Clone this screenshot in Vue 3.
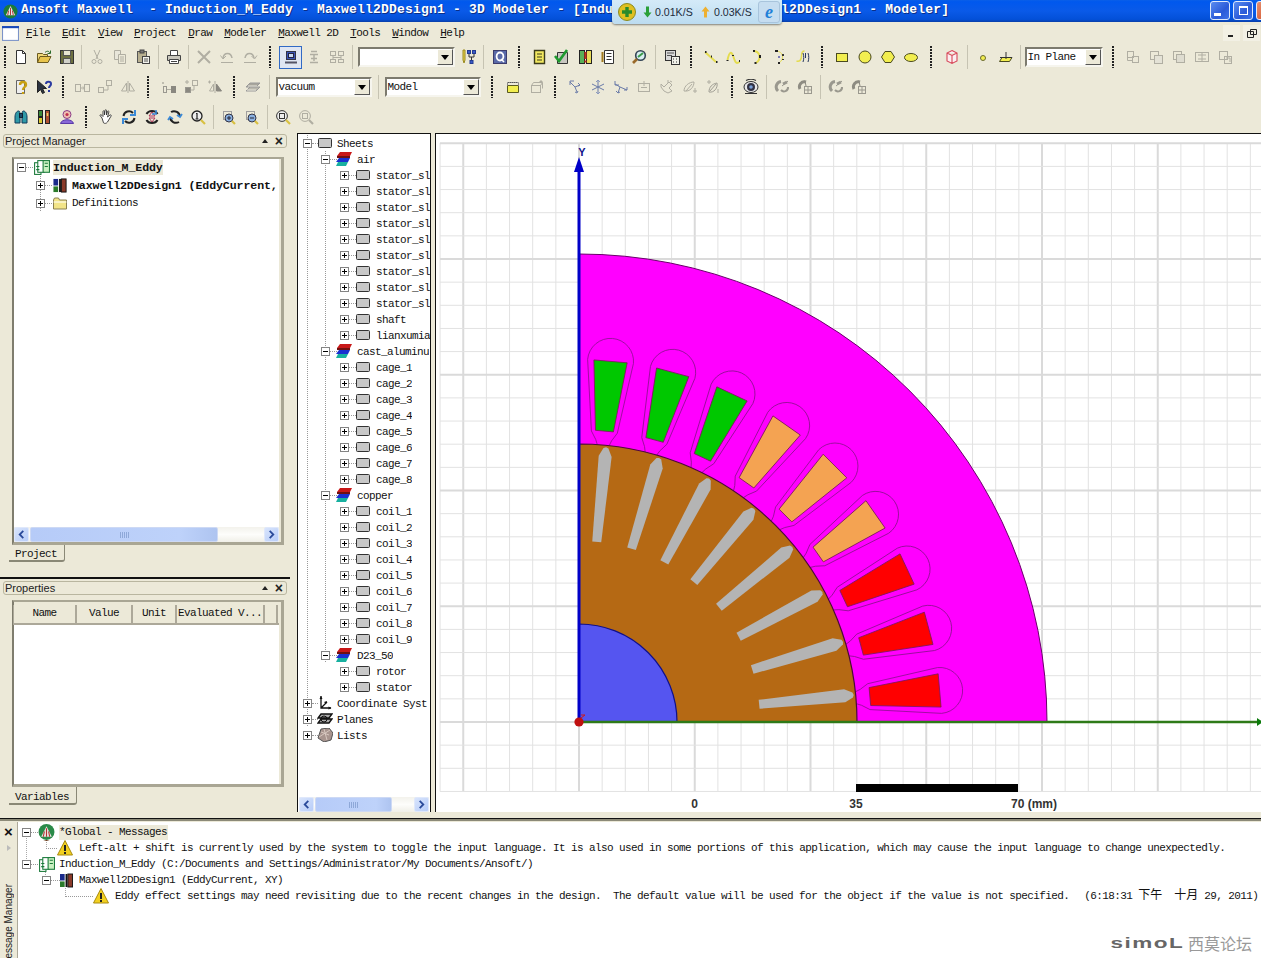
<script setup>
const GR = '#b0aea2'
const s = (d, c = '#222', w = 1, f = 'none') => `<path d="${d}" stroke="${c}" stroke-width="${w}" fill="${f}"/>`
const grayBox = (x, y, w, h, c = GR, f = 'none') => `<rect x="${x}" y="${y}" width="${w}" height="${h}" stroke="${c}" fill="${f}"/>`

const icons = {
  new: s('M3.5 1.5h6l3 3v10h-9z', '#333', 1, '#fff') + s('M9.5 1.5v3h3', '#333'),
  open: s('M1.5 13.5v-9h5l1 1h4v2', '#6b5a20', 1, '#f0d878') + s('M1.5 13.5l2.5-6h11l-3 6z', '#6b5a20', 1, '#e8c44c') + s('M9 3.5c2-2 4-1.5 5 .5m.5-2.5v3h-3', '#2a6a2a'),
  save: grayBox(1.5, 1.5, 13, 13, '#333', '#6d7040') + grayBox(4.5, 1.5, 7, 5, '#555', '#e8e6d0') + grayBox(4.5, 9.5, 7, 5, '#555', '#d0d0c8'),
  cut: s('M5 1l4 9M11 1l-4 9', GR) + `<circle cx="5" cy="12.5" r="2" stroke="${GR}" fill="none"/><circle cx="11" cy="12.5" r="2" stroke="${GR}" fill="none"/>`,
  copy: s('M2.5 1.5h6v9h-6z', GR, 1, '#e8e6da') + s('M6.5 5.5h7v9h-7z', GR, 1, '#ece9d8') + s('M8 8h4M8 10h4M8 12h4', GR),
  paste: grayBox(2.5, 2.5, 9, 11, '#555', '#b8b090') + grayBox(5, 1, 4, 3, '#444', '#777') + grayBox(7.5, 7.5, 7, 7, '#444', '#f2f2ec') + s('M9 10h4M9 12h4', '#555'),
  print: s('M4.5 1.5h7v5h-7z', '#444', 1, '#fff') + s('M1.5 6.5h13v5h-13z', '#444', 1, '#c8c6bc') + s('M3.5 10.5h9v4h-9z', '#444', 1, '#fff') + s('M5 12.5h6', '#444'),
  del: s('M2 2l12 12M14 2L2 14', GR, 2),
  undo: s('M4 9c1-6 8-6 9 0', GR, 1.5) + s('M1.5 6.5L4 10l3-3', GR) + s('M2 13.5h12', GR),
  redo: s('M3 9c1-6 8-6 9 0', GR, 1.5) + s('M9.5 7l3 3 2.5-3.5', GR) + s('M2 13.5h12', GR),
  select: grayBox(3.5, 2.5, 9, 8, '#334', '#3a55b8') + grayBox(5.5, 4.5, 5, 4, '#224', '#c8d8f0') + s('M2 13.5h12', '#556', 2),
  wifi: s('M5 2.5h6M4 5.5h8M8 6v6M5 9.5h6M4 13.5h8', GR, 1.5),
  net: grayBox(1.5, 2.5, 5, 4) + grayBox(9.5, 2.5, 5, 4) + grayBox(1.5, 10.5, 5, 3) + grayBox(9.5, 10.5, 5, 3) + s('M4 7v3M12 7v3M4 8.5h8', GR),
  tree: s('M3 1l2 0v10l-1 3-1-3z', '#9a8a20', 1, '#e8d44c') + grayBox(7.5, 1.5, 3, 3, '#233a90', '#3a5ac8') + grayBox(12.5, 1.5, 3, 3, '#233a90', '#3a5ac8') + s('M9 5v3h5V5M11.5 8v3', '#333') + grayBox(10, 11.5, 3, 3, '#233a90', '#3a5ac8'),
  q: grayBox(1.5, 1.5, 13, 13, '#3c3c6c', '#5a6aa8') + `<ellipse cx="8" cy="7.5" rx="3.4" ry="4" stroke="#fff" stroke-width="1.8" fill="none"/>` + s('M9 10l3 3', '#fff', 1.6),
  doc1: s('M3.5 1.5h10v13h-10z', '#3a3a1a', 1.4, '#f2e860') + s('M6 5h5M6 8h5M6 11h5', '#3a3a1a'),
  doc2: s('M3.5 3.5h10v11h-10z', '#333', 1, '#c8c6c0') + s('M1 7l4 5 8-11', '#1e9a2e', 2.6),
  doc3: grayBox(2.5, 1.5, 5, 13, '#222', '#58b058') + grayBox(9.5, 1.5, 5, 13, '#222', '#e8dc58') + s('M8.5 3v7', '#c03020', 2.2) + s('M8.5 11.5v2', '#c03020', 2.2),
  doc4: s('M4.5 1.5h9v13h-9z', '#333', 1, '#fff') + s('M6.5 4.5h5M6.5 7.5h5M6.5 10.5h5', '#333') + s('M2.5 3v10', '#a07a20', 2),
  search: `<circle cx="9.5" cy="6.5" r="4.8" stroke="#345" stroke-width="1.6" fill="#d8eef0"/>` + s('M6 10l-4 4', '#9a6a2a', 2.6) + s('M7 8l5-4', '#3a9a4a', 2),
  calc: grayBox(1.5, 1.5, 10, 10, '#333', '#d8d8d8') + s('M3 4h7M3 6.5h5', '#555') + grayBox(7.5, 7.5, 8, 8, '#333', '#f0f0e8') + s('M9 10h1M12 10h1M9 13h1M12 13h1', '#333'),
  cline: s('M2 3l11 10', '#e4dc50', 2) + s('M2 3h1.5M8 7.5h1M13 13h1.5', '#222', 2),
  spline: s('M1.5 11c2-9 4-9 6-3s3 7 6 5', '#e4dc50', 2) + s('M1.5 11v1M7 6v1M13 12h1', '#222', 2),
  arc: s('M4 2c7 0 9 8 3 12', '#e4dc50', 2) + s('M4 2h2M11 6v3M5.5 14h2', '#222', 2),
  arc2: s('M4 2c7 0 9 8 3 12', '#e4dc50', 1) + s('M3 2h3M11 5v2M11 10v1M6 14h2', '#222', 1.8) + `<circle cx="7" cy="8" r="1" fill="#55a"/>`,
  ft: s('M1.5 12c3 1 5-1 5-5s2-5 3-5', '#e4dc50', 1.5) + s('M8 4c1 3 1 6 0 9M13 4c1 3 1 6 0 9M10.5 4v5', '#2a3a60'),
  rect: grayBox(2.5, 4.5, 11, 8, '#4a4a20', '#f2ee50'),
  circle: `<circle cx="8" cy="8" r="6" stroke="#4a4a20" fill="#f2ee50"/>`,
  hex: s('M5 2.5h6l3.5 5.5L11 13.5H5L1.5 8z', '#4a4a20', 1, '#f2ee50'),
  ellipse: `<ellipse cx="8" cy="8.5" rx="6.5" ry="4" stroke="#4a4a20" fill="#f2ee50"/>`,
  prism: s('M8 1.5l5 2.5v8l-5 2.5-5-2.5V4z M3 4l5 2.5L13 4M8 6.5v8', '#d8485a', 1.1, '#fbeef0'),
  point: `<circle cx="8" cy="9" r="2.5" stroke="#6a6a30" fill="#f2ee50"/>`,
  plane: s('M4 8.5h10l-2.5 4h-10z', '#4a4a20', 1, '#f2ee50') + s('M8 3v7M2 8.5h12', '#333'),
  b1: grayBox(2.5, 2.5, 6, 6) + grayBox(7.5, 7.5, 6, 6) + s('M2.5 8.5v3h5', GR),
  b2: grayBox(2.5, 2.5, 8, 8) + grayBox(6.5, 6.5, 8, 8, GR, '#e4e2d6'),
  b3: grayBox(2.5, 2.5, 8, 8) + grayBox(5.5, 5.5, 8, 8, GR, '#dedcd0'),
  b4: grayBox(1.5, 3.5, 13, 9) + s('M8 4v8M4 6h8M4 10h8', GR),
  b5: grayBox(2.5, 2.5, 8, 8) + grayBox(7.5, 7.5, 7, 7, GR) + s('M9 9h4v4', GR),
  help: s('M3.5 1.5h8v13h-8z', '#666', 1, '#eee') + s('M7 6c0-4 6-4 6 0 0 2-3 2-3 5', '#c8a010', 2.4) + s('M10 13v2', '#c8a010', 2.2),
  whats: s('M1.5 1.5v12l3-3 2 4 2-1-2-4h4z', '#222', 1, '#2a3240') + s('M10 5c0-3 5-3 5 0 0 2-2 2-2 4', '#2a3aa0', 2) + s('M13 11v2', '#2a3aa0', 2),
  m1: grayBox(1.5, 5.5, 5, 7) + grayBox(10.5, 5.5, 5, 7) + s('M6.5 9h4M9 7.5l1.5 1.5L9 10.5', GR),
  m2: grayBox(1.5, 8.5, 5, 5) + grayBox(9.5, 1.5, 5, 5) + s('M7 11h4V7', GR),
  m3: s('M8 2v12', GR) + s('M6.5 4v8l-5 0z', GR) + s('M9.5 4v8l5 0z', GR),
  m4: s('M2 3v2M1 4h2', GR) + grayBox(2.5, 7.5, 3, 6, '#9a9890') + grayBox(10.5, 7.5, 4, 6, '#8a8880', '#8a8880') + s('M6 10.5h4', GR),
  m5: grayBox(1.5, 8.5, 5, 5, '#9a9890', '#8a8880') + grayBox(8.5, 1.5, 5, 5, GR) + s('M7 11h3V7M1 3h4M3 1v4', GR),
  m6: s('M8 2v12M1 3h3M2.5 1.5v3', GR) + s('M6.5 5v7l-4 0z', GR) + s('M9.5 5v7l5 0z', '#8a8880', 1, '#8a8880'),
  sheets: s('M5 4h10l-4 4H1z', '#999', 1, '#a8a69c') + s('M5 8h10l-4 4H1z', '#999', 1, '#bab8ac') + s('M3 7l9 0M2 11h9', '#e8e6dc'),
  box1: s('M2.5 6.5h11v7h-11z', '#5a5a20', 1, '#f2ee50') + s('M2.5 6.5v-3h11v3', '#888', 1) + `<path d="M3 3.5h10" stroke="#555" stroke-dasharray="1 1"/>`,
  box2: grayBox(3.5, 6.5, 9, 7) + s('M3.5 6.5l2-3h9l-2 3M14.5 3.5v6', GR) + s('M13 1v3M11.5 2.5h3', GR),
  ax1: s('M3 3l5 5 5-2M8 8l2 5M3 6V2h4M11 4l2 2-2 1M8 13l2 1 1-2', '#6a7ba8'),
  ax2: s('M8 1v14M2 5l12 6M14 5L2 11', '#6a7ba8') + s('M6 3l2-2 2 2M6 13l2 2 2-2', '#8a9ac0'),
  ax3: s('M2 5l5 3 7 3M7 8L5 14M2 2v4h4M11 11l3 0 0-3M3 12l2 2 2-1', '#6a7ba8'),
  g1: grayBox(2.5, 4.5, 11, 8) + s('M8 2v5M5 8.5h6', GR),
  g2: s('M2 5l3 3 5-5 3 3-3 3 3 3-4 2-4-2-3-4z M9 1v3M11 2l2 1', GR),
  g3: s('M2 12c0-5 5-9 10-9 0 5-4 10-10 9zM4 12l6-7', GR) + s('M13 9v5M11 12h4', GR),
  g4: s('M4 13c0-5 3-8 8-9 1 5-3 10-8 9z M5 12l6-7', '#a09e94') + s('M2 3h4M4 1v4M13 10v4', GR),
  eye: `<ellipse cx="8" cy="8" rx="7" ry="5.5" stroke="#333" fill="#e8e8e8"/><circle cx="8" cy="8" r="4" fill="#334" /><circle cx="8" cy="8" r="1.8" fill="#7aa0d8"/>` + s('M3 1.5c3-1.5 7-1.5 10 0M2 14.5h12', '#333', 1.2),
  rotg: s('M4 12a5.5 5.5 0 0 1 3-9.5', '#9a988e', 3) + s('M13 3l-4 2', '#9a988e', 3) + s('M8 7l6-5', '#9a988e', 1) + s('M7 11a4 4 0 0 0 7-3', '#9a988e', 2),
  rotb: s('M3 10a5 5 0 0 1 6-7', '#8e8c82', 3) + s('M4 3l4-1 1 5', '#8e8c82') + grayBox(7.5, 7.5, 7, 7, '#9a988e') + s('M7.5 11h7M11 7.5v7', '#9a988e'),
  binoc: s('M2 8c0-4 2-6 3.5-6S7 4 7 7v7H2z', '#103a5a', 1, '#2f9aa8') + s('M14 8c0-4-2-6-3.5-6S9 4 9 7v7h5z', '#103a5a', 1, '#2f9aa8') + grayBox(6.5, 4.5, 3, 4, '#123', '#1a4a6a'),
  bars: grayBox(2.5, 1.5, 4, 6, '#222', '#3a8a3a') + grayBox(2.5, 8.5, 4, 6, '#222', '#dcc830') + grayBox(9.5, 1.5, 4, 13, '#222', '#b05030') + s('M11.5 4v3', '#f2d060', 1.5),
  person: `<circle cx="8" cy="5.5" r="4" stroke="#8a3a8a" fill="#f0c0b0"/><circle cx="8" cy="5.5" r="1.6" fill="#c03050"/>` + s('M1.5 14.5c1-5 12-5 13 0z', '#5a3aa8', 1, '#8868d8'),
  hand: s('M4 9L2 6.5c0-1 1-1 2 0l1 1V2.5c0-1 1.5-1 1.5 0V6l.5-4.5c0-1 1.5-1 1.5 0V6l1-3.5c.3-1 1.6-.6 1.4.4L9.5 8l2.5-2c1-.5 1.6.5 1 1.2L9.5 13c-1 1.5-3 1.8-4 .8z', '#333', .9, '#fff'),
  rot1: s('M2.5 7a5.5 5.5 0 0 1 9.5-3', '#222', 2) + s('M13.5 9a5.5 5.5 0 0 1-9.5 3', '#222', 2) + s('M14 1v5h-5', '#3a8ad8', 2) + s('M2 15v-5h5', '#3a8ad8', 2),
  rot2: s('M2.5 5a6 5 0 0 1 11 0M2.5 11a6 5 0 0 0 11 0', '#222', 2) + s('M8 3l-3 4h6zM8 13l-3-4h6z', '#b0365a', 1) + s('M12 1v4h-4', '#3a8ad8', 1.6),
  rot3: s('M4 3a6 6 0 0 1 9 5M12 13a6 6 0 0 1-9-5', '#222', 2) + s('M15 5l-2 3-3-2M1 11l2-3 3 2', '#3a8ad8', 1.8),
  zinfo: `<circle cx="7" cy="7" r="5" stroke="#222" stroke-width="1.3" fill="#eee"/>` + s('M7 4v6M6 4.5h1M5.5 10h3', '#222', 1.2) + s('M11 11l4 4', '#d8c040', 2.2),
  zin: s('M2.5 2.5h8v8h-8z', '#556', 1, 'none').replace('/>', ' stroke-dasharray="1 1"/>') + `<circle cx="8" cy="9" r="4" fill="#8ab0e0" stroke="#334"/>` + s('M6 9h4M8 7v4', '#223') + s('M11 12l3 3', '#d8c040', 2.2),
  zout: s('M2.5 2.5h8v8h-8z', '#556', 1, 'none').replace('/>', ' stroke-dasharray="1 1"/>') + `<circle cx="8" cy="9" r="4" fill="#8ab0e0" stroke="#334"/>` + s('M6 9h4', '#223') + s('M11 12l3 3', '#d8c040', 2.2),
  zfit: `<circle cx="7" cy="7" r="5.4" stroke="#333" fill="#eee"/>` + grayBox(4.5, 4.5, 5, 5, '#333') + s('M11 11l4 4', '#d8c040', 2.2),
  zfitg: `<circle cx="7" cy="7" r="5.4" stroke="${GR}" fill="none"/>` + grayBox(4.5, 4.5, 5, 5) + s('M11 11l4 4', GR, 2.2),
}

const i = (...names) => names.map(n => ({ t: 'i', n }))
const g = w => ({ t: 'g', w })
const p = w => ({ t: 's', w })
const c = (w, text) => ({ t: 'c', w, text })

const row1 = [g(9), ...i('new', 'open', 'save'), p(7), ...i('cut', 'copy', 'paste'), p(8), ...i('print'), p(7), ...i('del', 'undo', 'redo'), g(18),
  { t: 'i', n: 'select', on: true }, ...i('wifi', 'net'), p(8), c(100, ''), ...i('tree'), p(9), ...i('q'), g(16), ...i('doc1', 'doc2', 'doc3', 'doc4'), p(8), ...i('search'), p(10), ...i('calc'), g(16),
  ...i('cline', 'spline', 'arc', 'arc2', 'ft'), g(16), ...i('rect', 'circle', 'hex', 'ellipse'), g(18), ...i('prism'), p(8), ...i('point', 'plane'), p(6), c(81, 'In Plane'), g(17), ...i('b1', 'b2', 'b3', 'b4', 'b5')]
const row2 = [g(9), ...i('help', 'whats'), g(15), ...i('m1', 'm2', 'm3'), g(18), ...i('m4', 'm5', 'm6'), g(15), ...i('sheets'), p(10), c(99, 'vacuum'), p(10), c(99, 'Model'), g(19), ...i('box1', 'box2'), g(16),
  ...i('ax1', 'ax2', 'ax3', 'g1', 'g2', 'g3', 'g4'), g(15), ...i('eye'), p(8), ...i('rotg', 'rotb'), p(8), ...i('rotg', 'rotb')]
const row3 = [g(9), ...i('binoc', 'bars', 'person'), g(16), ...i('hand', 'rot1', 'rot2', 'rot3', 'zinfo'), p(8), ...i('zin', 'zout'), p(8), ...i('zfit', 'zfitg')]
const toolbars = [row1, row2, row3]

const titleText = 'Ansoft Maxwell  - Induction_M_Eddy - Maxwell2DDesign1 - 3D Modeler - [Induction_M_Eddy - Maxwell2DDesign1 - Modeler]'
const warnA = 'Left-alt + shift is currently used by the system to toggle the input language. It is also used in some portions of this application, which may cause the input language to change unexpectedly.'
const warnB = 'Eddy effect settings may need revisiting due to the recent changes in the design.  The default value will be used for the object if the value is not specified.  '

const menus = ['File', 'Edit', 'View', 'Project', 'Draw', 'Modeler', 'Maxwell 2D', 'Tools', 'Window', 'Help']

const kids = names => names.map(n => ({ lv: 2, text: n, icon: 'sheet', g: 'g0 g1', box: 'plus' }))
const tree = [
  { lv: 0, text: 'Sheets', icon: 'sheet', g: 'g0', box: 'minus' },
  { lv: 1, text: 'air', icon: 'stack', g: 'g0 g1', box: 'minus' },
  ...kids([...Array(9).fill('stator_sl'), 'shaft', 'lianxumia']),
  { lv: 1, text: 'cast_aluminu', icon: 'stack', g: 'g0 g1', box: 'minus' },
  ...kids(Array.from({ length: 8 }, (_, k) => `cage_${k + 1}`)),
  { lv: 1, text: 'copper', icon: 'stack', g: 'g0 g1', box: 'minus' },
  ...kids(Array.from({ length: 9 }, (_, k) => `coil_${k + 1}`)),
  { lv: 1, text: 'D23_50', icon: 'stack', g: 'g0 g1', box: 'minus' },
  { lv: 2, text: 'rotor', icon: 'sheet', g: 'g0', box: 'plus' },
  { lv: 2, text: 'stator', icon: 'sheet', g: 'g0', box: 'plus' },
  { lv: 0, text: 'Coordinate Syst', icon: 'coord', g: 'g0', box: 'plus' },
  { lv: 0, text: 'Planes', icon: 'planes', g: 'g0', box: 'plus' },
  { lv: 0, text: 'Lists', icon: 'lists', g: '', box: 'plus' },
]

const columns = [
  { t: 'Name', w: 63 }, { t: 'Value', w: 56 }, { t: 'Unit', w: 44 }, { t: 'Evaluated V...', w: 88 }, { t: '', w: 13 },
]

/* Drawing: local slot shapes are given on the +Y axis and rotated about the origin. */
const OX = 579, OY = 722, CELL = 23.15
const gridV = [], gridH = []
for (let k = -6; k <= 30; k++) gridV.push({ x: OX + k * CELL, major: k % 5 === 0 })
for (let k = -3; k <= 25; k++) gridH.push({ y: OY - k * CELL, major: k % 5 === 0 })

const pt = (v, r) => `${OX + v} ${OY - r}`
const slotPath = `M${pt(-6, 278)} L${pt(-8, 283)} L${pt(-13, 291)} L${pt(-23, 362)} A23 23 0 0 1 ${pt(23, 362)} L${pt(13, 291)} L${pt(8, 283)} L${pt(6, 278)}`
const coilPath = `M${pt(-9, 292)} L${pt(-16.7, 362)} L${pt(16.7, 362)} L${pt(9, 292)}Z`
const barPath = `M${pt(-4.5, 181)} L${pt(-6.5, 267)} L${pt(-2.5, 275)} L${pt(0, 276)} L${pt(2.5, 275)} L${pt(6.5, 267)} L${pt(4.5, 181)}Z`
const coilColors = ['#00c800', '#00c800', '#00c800', '#f4a352', '#f4a352', '#f4a352', '#ff0000', '#ff0000', '#ff0000']
const slots = coilColors.map((color, k) => ({ color, a: 5 + k * 10 }))
const bars = Array.from({ length: 8 }, (_, k) => 5.625 + k * 11.25)
const sector = r => `M${OX} ${OY}V${OY - r}A${r} ${r} 0 0 1 ${OX + r} ${OY}Z`
</script>

<template>
  <div class="app mono">
    <header class="title">
      <svg class="logo" viewBox="0 0 16 16"><circle cx="8" cy="8" r="7.5" fill="#1c7a3a" /><path d="M8 2l5 10H3z" fill="#e8e8e8" /><path d="M8 4v8M6 7l-1 5M10 7l1 5" stroke="#b03030" /></svg>
      <div class="title-text">{{ titleText }}</div>
      <div class="win-btns">
        <span class="wbtn"><i class="w-min"></i></span>
        <span class="wbtn"><i class="w-res"></i></span>
        <span class="wbtn close"></span>
      </div>
      <div class="netmeter sans">
        <svg class="net-plus" viewBox="0 0 18 18"><circle cx="9" cy="9" r="8.5" fill="#e0c020" stroke="#8a8a20" /><path d="M9 4v10M4 9h10" stroke="#2a8a2a" stroke-width="3.4" /></svg>
        <svg class="net-arrow first" viewBox="0 0 9 12"><path d="M4.5 11.5L.5 6.5h2.5V.5h3v6h2.5z" fill="#2aa038" /></svg>
        <span class="rate">0.01K/S</span>
        <svg class="net-arrow" viewBox="0 0 9 12"><path d="M4.5 .5L.5 5.5h2.5v6h3v-6h2.5z" fill="#eeb030" /></svg>
        <span class="rate">0.03K/S</span>
        <span class="ie"><b>e</b></span>
      </div>
    </header>

    <nav class="menu">
      <svg class="mdi-icon" viewBox="0 0 16 16"><rect x=".5" y="1.5" width="15" height="13" fill="#fff" stroke="#7c93c8" /><rect x="0" y="1" width="16" height="2" fill="#1a4ab8" /></svg>
      <span v-for="m in menus" :key="m"><u>{{ m[0] }}</u>{{ m.slice(1) }}</span>
      <div class="mdi-btns">
        <span class="mdi-btn"><svg viewBox="0 0 12 12"><path d="M2 9h5" stroke="#222" stroke-width="2" /></svg></span>
        <span class="mdi-btn"><svg viewBox="0 0 12 12"><path d="M4.5 2.5h6v5h-6zM1.5 4.5h6v6h-6z" stroke="#222" fill="#eeecdf" /></svg></span>
      </div>
    </nav>

    <section v-for="(bar, idx) in toolbars" :key="idx" class="toolbar">
      <template v-for="(it, n) in bar" :key="n">
        <span v-if="it.t === 'i'" class="cell" :class="{ on: it.on }">
          <svg class="ic" viewBox="0 0 16 16" v-html="icons[it.n]"></svg>
        </span>
        <span v-else-if="it.t === 'g'" class="grip" :style="{ width: it.w + 'px' }"></span>
        <span v-else-if="it.t === 's'" class="sep" :style="{ width: it.w + 'px' }"></span>
        <span v-else class="combo-cell" :style="{ width: it.w + 'px' }">
          <span class="combo"><span class="combo-text">{{ it.text }}</span><span class="combo-btn"></span></span>
        </span>
      </template>
    </section>

    <main class="main">
      <aside class="left">
        <div class="pane pane-project">
          <div class="pane-title sans"><span>Project Manager</span><span class="pane-ctl"><i class="tri"></i><b>×</b></span></div>
          <div class="frame">
            <div class="frame-body">
              <div class="ptree">
                <div class="prow p0">
                  <i class="bx minus"></i><i class="stub s-root"></i>
                  <svg class="pic" viewBox="0 0 16 16"><rect x="1.5" y="3.5" width="6" height="11" fill="#fff" stroke="#1a7a3a" /><rect x="4.5" y="1.5" width="6" height="11" fill="#fff" stroke="#1a7a3a" /><rect x="9.5" y="1.5" width="6" height="11" fill="#c8f0c0" stroke="#1a7a3a" /><path d="M11 4h3M11 7h3M3 7h3M3 10h3" stroke="#1a7a3a" /></svg>
                  <b class="sel">Induction_M_Eddy</b>
                </div>
                <div class="prow p1 pg">
                  <i class="bx plus"></i><i class="stub"></i>
                  <svg class="pic2" viewBox="0 0 14 16"><rect x="0" y="1" width="5" height="7" fill="#1a2a8a" /><rect x="0" y="9" width="5" height="6" fill="#2a7a2a" /><rect x="6" y="1" width="2" height="14" fill="#111" /><rect x="8.5" y="1" width="5" height="14" fill="#8a3a2a" stroke="#111" /></svg>
                  <b class="clip">Maxwell2DDesign1 (EddyCurrent, XY)</b>
                </div>
                <div class="prow p1 pg">
                  <i class="bx plus"></i><i class="stub"></i>
                  <svg class="pic2" viewBox="0 0 14 14"><path d="M.5 3.5l1-2h4l1 2h7v9H.5z" fill="#f2e488" stroke="#8a8050" /><path d="M.5 5.5h13" stroke="#fff" /></svg>
                  <span>Definitions</span>
                </div>
              </div>
              <div class="sb">
                <span class="sb-btn"><svg viewBox="0 0 10 10"><path d="M7 1L3 5l4 4" stroke="#2a4a9a" stroke-width="2" fill="none" /></svg></span>
                <span class="sb-thumb thumb-a"></span>
                <span class="sb-track"></span>
                <span class="sb-btn"><svg viewBox="0 0 10 10"><path d="M3 1l4 4-4 4" stroke="#2a4a9a" stroke-width="2" fill="none" /></svg></span>
              </div>
            </div>
          </div>
          <div class="tab tab-project">Project</div>
        </div>
        <div class="hline"></div>
        <div class="pane pane-props">
          <div class="pane-title sans"><span>Properties</span><span class="pane-ctl"><i class="tri"></i><b>×</b></span></div>
          <div class="frame frame-props">
            <div class="frame-body">
              <div class="thead">
                <span v-for="col in columns" :key="col.t" class="th" :style="{ width: col.w + 'px' }">{{ col.t }}</span>
              </div>
            </div>
          </div>
          <div class="tab tab-vars">Variables</div>
        </div>
      </aside>

      <section class="treepane">
        <div class="tree">
          <div v-for="(r, n) in tree" :key="n" class="trow" :class="['lv' + r.lv, r.g]">
            <i class="bx" :class="r.box"></i><i class="stub"></i>
            <svg v-if="r.icon === 'sheet'" class="tic" viewBox="0 0 14 10"><rect x=".5" y=".5" width="13" height="9" rx="1" fill="#c8c8c8" stroke="#333" /></svg>
            <svg v-else-if="r.icon === 'stack'" class="tic-big" viewBox="0 0 16 14" preserveAspectRatio="none"><path d="M4 0h12l-2 4H1z" fill="#c81818" /><path d="M1 4h13v2H1z" fill="#701010" /><path d="M3 6h11l-2 4H0z" fill="#1a30d0" /><path d="M2 10h10l-2 4H0z" fill="#18b0a0" /></svg>
            <svg v-else-if="r.icon === 'coord'" class="tic-big" viewBox="0 0 14 14"><path d="M3 0v12h10M3 12l6-6" stroke="#111" stroke-width="1.3" fill="none" /><path d="M3 0L1.5 3h3zM13.5 12l-3-1.5v3zM9 5L6 6l2 2z" fill="#111" /></svg>
            <svg v-else-if="r.icon === 'planes'" class="tic-big" viewBox="0 0 16 12"><path d="M4 1h11l-3 4H1zM4 6h11l-3 4H1z" fill="#aaa" stroke="#111" stroke-width="1.4" /><circle cx="7" cy="6" r="3" fill="none" stroke="#111" /></svg>
            <svg v-else class="tic-big" viewBox="0 0 16 14"><path d="M4 1l8-1 4 5-2 7-7 2-6-4z" fill="#a8948e" stroke="#555" /><path d="M4 4l8 3M7 1l3 11M2 9l11-7" stroke="#d8c8c0" /></svg>
            <span class="tlabel">{{ r.text }}</span>
          </div>
        </div>
        <div class="sb sb-tree">
          <span class="sb-btn"><svg viewBox="0 0 10 10"><path d="M7 1L3 5l4 4" stroke="#2a4a9a" stroke-width="2" fill="none" /></svg></span>
          <span class="sb-thumb thumb-b"></span>
          <span class="sb-track"></span>
          <span class="sb-btn"><svg viewBox="0 0 10 10"><path d="M3 1l4 4-4 4" stroke="#2a4a9a" stroke-width="2" fill="none" /></svg></span>
        </div>
      </section>

      <section class="canvas">
        <svg class="draw" width="825" height="678" viewBox="436 134 825 678">
          <g fill="none">
            <line v-for="l in gridV" :key="'v' + l.x" :x1="l.x" :x2="l.x" y1="143" y2="791.5" :stroke-width="l.major ? 2 : 1" :stroke="l.major ? '#dadada' : '#e2e2e2'" />
            <line v-for="l in gridH" :key="'h' + l.y" x1="440" x2="1261" :y1="l.y" :y2="l.y" :stroke-width="l.major ? 2 : 1" :stroke="l.major ? '#dadada' : '#e2e2e2'" />
          </g>
          <path :d="sector(468)" fill="#ff00ff" stroke="#6a006a" />
          <g v-for="sl in slots" :key="sl.a" :transform="`rotate(${sl.a} ${OX} ${OY})`">
            <path :d="slotPath" fill="none" stroke="#8e1090" stroke-width=".8" />
            <path :d="coilPath" :fill="sl.color" stroke="#7a1a5a" stroke-width=".8" />
          </g>
          <path :d="sector(278)" fill="#b56914" stroke="#4a0a3a" stroke-width="1.2" />
          <path v-for="a in bars" :key="a" :d="barPath" fill="#b4b4b4" :transform="`rotate(${a} ${OX} ${OY})`" />
          <path :d="sector(98)" fill="#5555f0" stroke="#10108a" stroke-width="1.2" />
          <path d="M579 722V170" stroke="#0000c8" stroke-width="3" />
          <path d="M579 157l5 15h-10z" fill="#0000c8" />
          <text x="582" y="156" text-anchor="middle" class="axis-y">Y</text>
          <path d="M579 722H1261" stroke="#2e7a18" stroke-width="2.4" />
          <path d="M1257 718l6 4-6 4z" fill="#0a7a0a" />
          <path d="M581 718l4-3m-4 0h4" stroke="#d01818" />
          <circle cx="579" cy="722" r="4.6" fill="#c01010" />
          <rect x="856" y="784" width="162" height="8" fill="#000" />
          <text x="694.5" y="808" class="scale" text-anchor="middle">0</text>
          <text x="856" y="808" class="scale" text-anchor="middle">35</text>
          <text x="1011" y="808" class="scale">70 (mm)</text>
        </svg>
      </section>
    </main>

    <footer class="msgs">
      <div class="msg-side">
        <b class="msg-x sans">×</b>
        <i class="msg-tri"></i>
        <span class="msg-label sans">Message Manager</span>
      </div>
      <div class="msg-body">
        <div class="mrow m-a gl-b">
          <i class="bx minus"></i><i class="stub"></i>
          <svg class="mic" viewBox="0 0 16 16"><circle cx="8" cy="7.5" r="7.5" fill="#2a8a48" /><path d="M8 2l5 10H3z" fill="#e8e4e0" /><path d="M8 4v8M6 7l-1 5M10 7l1 5" stroke="#b03030" /><path d="M5 15h6l-3 1z" fill="#6a3a1a" /></svg>
          <span class="sel sel-m">*Global - Messages</span>
        </div>
        <div class="mrow m-b gl-full">
          <i class="stub s-lead"></i>
          <svg class="warn" viewBox="0 0 16 16"><path d="M8 .5L15.5 15H.5z" fill="#f2d020" stroke="#a88a10" /><path d="M8 5v6" stroke="#222" stroke-width="2" /><path d="M8 12v2" stroke="#222" stroke-width="2" /></svg>
          <span>{{ warnA }}</span>
        </div>
        <div class="mrow m-a gl-t">
          <i class="bx minus"></i><i class="stub"></i>
          <svg class="mic" viewBox="0 0 16 16"><rect x="1.5" y="3.5" width="6" height="11" fill="#fff" stroke="#1a7a3a" /><rect x="4.5" y="1.5" width="6" height="11" fill="#fff" stroke="#1a7a3a" /><rect x="9.5" y="1.5" width="6" height="11" fill="#c8f0c0" stroke="#1a7a3a" /><path d="M11 4h3M11 7h3M3 7h3M3 10h3" stroke="#1a7a3a" /></svg>
          <span>Induction_M_Eddy (C:/Documents and Settings/Administrator/My Documents/Ansoft/)</span>
        </div>
        <div class="mrow m-c">
          <i class="bx minus"></i><i class="stub s-mid"></i>
          <svg class="mic2" viewBox="0 0 14 16"><rect x="0" y="1" width="5" height="7" fill="#1a2a8a" /><rect x="0" y="9" width="5" height="6" fill="#2a7a2a" /><rect x="6" y="1" width="2" height="14" fill="#111" /><rect x="8.5" y="1" width="5" height="14" fill="#8a3a2a" stroke="#111" /></svg>
          <span>Maxwell2DDesign1 (EddyCurrent, XY)</span>
        </div>
        <div class="mrow m-d">
          <i class="stub s-long"></i>
          <svg class="warn" viewBox="0 0 16 16"><path d="M8 .5L15.5 15H.5z" fill="#f2d020" stroke="#a88a10" /><path d="M8 5v6" stroke="#222" stroke-width="2" /><path d="M8 12v2" stroke="#222" stroke-width="2" /></svg>
          <span>{{ warnB }}<span class="stamp">(6:18:31 <span class="cjk">下午</span>{{ '  ' }}<span class="cjk">十月</span> 29, 2011)</span></span>
        </div>
        <div class="watermark"><b class="wm-latin sans">simoL</b><span class="wm-cjk">西莫论坛</span></div>
      </div>
    </footer>
  </div>
</template>

<style>
html, body { margin: 0; background: #ece9d8; overflow: hidden; }
</style>

<style scoped>
.app { width: 1261px; height: 958px; display: flex; flex-direction: column; overflow: hidden; background: #ece9d8; color: #111; }
.mono { font-family: "Liberation Mono", "Noto Sans CJK SC", monospace; font-size: 11px; letter-spacing: -0.6px; white-space: pre; }
.sans { font-family: "Liberation Sans", sans-serif; letter-spacing: 0; }

.title { position: relative; flex: none; height: 22px; display: flex; align-items: center; background: linear-gradient(#0a5fe8 0, #0058ee 8%, #0a5ae8 50%, #0350d8 88%, #0a3ea8 100%); color: #fff; }
.logo { width: 15px; height: 15px; margin: 0 3px 0 3px; flex: none; }
.title-text { font-family: "Liberation Mono", monospace; font-weight: 700; font-size: 13px; letter-spacing: .2px; line-height: 19px; height: 22px; text-shadow: 1px 1px 0 #0a2f88; white-space: pre; }
.win-btns { position: absolute; right: -15px; top: 1px; display: flex; gap: 3px; }
.wbtn { width: 20px; height: 19px; border: 1px solid #dfe9fb; border-radius: 3px; box-sizing: border-box; background: linear-gradient(135deg, #5a8cf0, #2a5ad8 60%, #3e72e8); display: flex; align-items: center; justify-content: center; }
.wbtn.close { background: linear-gradient(135deg, #e89070, #d04a20); }
.w-min { width: 7px; height: 3px; background: #fff; margin: 8px 6px 0 0; }
.w-res { width: 7px; height: 6px; border: 1px solid #fff; border-top-width: 2px; }
.netmeter { position: absolute; left: 612px; top: 0; width: 170px; height: 24px; box-sizing: border-box; display: flex; align-items: center; padding-left: 6px; font-size: 11px; color: #1c2c3c; background: linear-gradient(#d4eaf8, #bcdcf0); border-radius: 0 0 4px 4px; box-shadow: 0 1px 2px rgba(0, 0, 0, .45); }
.net-plus { width: 18px; height: 18px; margin-right: 7px; flex: none; }
.net-arrow { width: 9px; height: 12px; flex: none; margin: 0 4px 0 8px; }
.net-arrow.first { margin: 0 3px 0 0; }
.rate { width: 38px; flex: none; font-size: 10.6px; }
.ie { margin-left: 6px; width: 22px; height: 22px; background: #c6ddf0; border: 1px solid #a8c4dc; border-radius: 3px; box-sizing: border-box; display: flex; align-items: center; justify-content: center; font: italic 700 18px "Liberation Serif", serif; color: #2080d8; }

.menu { flex: none; height: 20px; display: flex; align-items: center; gap: 12px; box-sizing: border-box; padding: 2px 0 0 2px; background: #ece9d8; }
.mdi-icon { width: 17px; height: 17px; margin-right: -5px; flex: none; }
.mdi-btns { margin-left: auto; display: flex; gap: 3px; margin-right: 1px; }
.mdi-btn { width: 17px; height: 16px; background: #f2f0e4; display: flex; align-items: center; justify-content: center; }
.mdi-btn svg { width: 12px; height: 12px; }

.toolbar { flex: none; height: 30px; display: flex; align-items: center; }
.cell { width: 23px; height: 23px; flex: none; display: flex; align-items: center; justify-content: center; box-sizing: border-box; }
.cell.on { border: 1px solid #316ac5; background: #e0e6f2; }
.ic { width: 16px; height: 16px; display: block; }
.grip { flex: none; height: 22px; background: repeating-linear-gradient(#222 0 2px, transparent 2px 3px) center / 2px 100% no-repeat; }
.sep { flex: none; height: 24px; background: linear-gradient(#c6c3b2, #c6c3b2) center / 1px 100% no-repeat; }
.combo-cell { flex: none; display: flex; justify-content: center; }
.combo { width: calc(100% - 3px); min-width: 0; height: 20px; box-sizing: border-box; display: flex; align-items: center; background: #fff; border: 2px solid; border-color: #7c7a6e #f6f5ee #f6f5ee #7c7a6e; }
.combo-text { flex: 1; padding-left: 1px; overflow: hidden; }
.combo-btn { width: 16px; height: 16px; flex: none; box-sizing: border-box; border: 1px solid; border-color: #fff #555 #555 #fff; background: #ece9d8; position: relative; }
.combo-btn::after { content: ""; position: absolute; left: 3px; top: 5px; border: 4px solid transparent; border-top: 5px solid #000; border-bottom: 0; }

.main { flex: none; height: 686px; display: flex; }
.left { width: 290px; flex: none; display: flex; flex-direction: column; }
.pane-project { height: 445px; flex: none; display: flex; flex-direction: column; }
.pane-props { flex: 1; display: flex; flex-direction: column; min-height: 0; }
.hline { flex: none; background: #111; height: 2px; }
.pane-title { flex: none; height: 14px; box-sizing: border-box; margin: 2px 3px 0; padding: 0 3px 0 1px; display: flex; justify-content: space-between; align-items: center; font-size: 11px; line-height: 12px; border: 1px solid #b9b69f; border-radius: 3px; color: #222; }
.pane-ctl { display: flex; align-items: center; gap: 7px; }
.tri { width: 0; height: 0; border: 3px solid transparent; border-bottom: 4px solid #222; border-top: 0; }
.pane-ctl b { font-size: 14px; line-height: 12px; }
.frame { flex: 1; min-height: 0; margin: 9px 6px 0 12px; border-style: solid; border-width: 2px 3px 3px 2px; border-color: #a9a694 #a9a694 #a9a694 #7f7d6e; display: flex; box-sizing: border-box; }
.frame-body { flex: 1; margin-right: 2px; background: #fff; display: flex; flex-direction: column; min-width: 0; }
.frame-props { margin-top: 5px; }
.frame-props .frame-body { margin-top: 3px; }
.tab { flex: none; margin-left: 9px; box-sizing: border-box; padding: 0 6px; border: 1px solid #8a8876; border-top: 0; border-left: 0; border-radius: 0 0 3px 0; align-self: flex-start; border-bottom-width: 2px; background: #ece9d8; }
.tab-project { width: 56px; height: 17px; line-height: 19px; margin-bottom: 15px; }
.tab-vars { width: 68px; height: 18px; line-height: 20px; margin-bottom: 13px; }

.ptree { flex: 1; margin-top: -1px; overflow: hidden; }
.prow { height: 18px; display: flex; align-items: center; }
.p0 { padding-left: 3px; }
.p1 { padding-left: 22px; }
.pg { background: repeating-linear-gradient(#999 0 1px, transparent 1px 2px) 26px 0 / 1px 100% no-repeat; }
.s-root { width: 6px; }
.pic { width: 17px; height: 17px; margin: 0 3px 0 0; flex: none; }
.pic2 { width: 14px; height: 15px; margin: 0 5px 0 1px; flex: none; }
.prow b { font-weight: 700; font-size: 11.6px; letter-spacing: -0.1px; }
.sel { background: #ece9d8; line-height: 15px; }
.clip { overflow: hidden; flex: none; width: 206px; }
.bx { width: 9px; height: 9px; flex: none; box-sizing: border-box; border: 1px solid #848484; background-color: #fff; }
.bx.minus { background-image: linear-gradient(#000, #000); background-size: 5px 1px; background-position: center; background-repeat: no-repeat; }
.bx.plus { background-image: linear-gradient(#000, #000), linear-gradient(#000, #000); background-size: 5px 1px, 1px 5px; background-position: center, center; background-repeat: no-repeat; }
.stub { width: 7px; height: 0; flex: none; border-top: 1px dotted #999; }

.sb { flex: none; height: 15px; display: flex; background: linear-gradient(#f3f2ec, #fdfdfb 50%, #f0efe8); }
.sb-btn { width: 15px; flex: none; display: flex; align-items: center; justify-content: center; background: linear-gradient(135deg, #d8e4fc, #b8cdf8); border-radius: 2px; box-sizing: border-box; border: 1px solid #dfe8fb; }
.sb-btn svg { width: 9px; height: 9px; }
.sb-thumb { background: repeating-linear-gradient(90deg, #8ea8d8 0 1px, transparent 1px 2px) center / 9px 6px no-repeat, linear-gradient(90deg, #b6cbf8, #bed2fa 80%, #aec4f0); border: 1px solid #cdd9f4; box-sizing: border-box; border-radius: 2px; margin-left: 1px; }
.sb-track { flex: 1; }
.thumb-a { width: 188px; }
.thumb-b { width: 77px; }

.thead { display: flex; height: 20px; flex: none; background: #ece9d8; border-bottom: 2px solid #aca899; box-sizing: border-box; border-left: 1px solid #aca899; margin-left: -1px; }
.th { flex: none; box-sizing: border-box; line-height: 17px; text-align: center; border-right: 2px solid #aca899; overflow: hidden; }

.treepane { width: 134px; flex: none; box-sizing: border-box; margin: 1px 0 6px 7px; border-left: 1px solid #111; border-top: 1px solid #111; border-right: 1px solid #111; background: #fff; display: flex; flex-direction: column; }
.tree { flex: 1; padding-top: 1px; overflow: hidden; min-height: 0; }
.trow { height: 16px; display: flex; align-items: center; background-repeat: no-repeat; }
.lv0 { padding-left: 5px; }
.lv1 { padding-left: 23px; }
.lv2 { padding-left: 42px; }
.g0 { background-image: repeating-linear-gradient(#999 0 1px, transparent 1px 2px); background-size: 1px 100%; background-position: 9px 0; }
.g0.g1 { background-image: repeating-linear-gradient(#999 0 1px, transparent 1px 2px), repeating-linear-gradient(#999 0 1px, transparent 1px 2px); background-size: 1px 100%, 1px 100%; background-position: 9px 0, 27px 0; }
.lv0 .stub { width: 6px; }
.tic { width: 14px; height: 10px; flex: none; }
.tic-big { width: 16px; height: 14px; flex: none; margin: 0 -1px; }
.tlabel { margin-left: 6px; padding-top: 1px; overflow: hidden; }
.lv0 .tlabel { margin-left: 5px; }
.sb-tree { margin: 0 1px; }

.canvas { flex: 1; margin: 1px 0 6px 4px; border-left: 1px solid #111; border-top: 1px solid #111; background: #fff; min-width: 0; overflow: hidden; }
.draw { display: block; }
.axis-y { font: 700 11px "Liberation Sans", sans-serif; fill: #10108a; letter-spacing: 0; }
.scale { font: 700 12px "Liberation Sans", sans-serif; fill: #333; letter-spacing: 0; }

.msgs { flex: 1; min-height: 0; display: flex; border-top: 1px solid #111; box-shadow: inset 0 2px 0 #8c8a78; padding-top: 3px; position: relative; }
.msg-side { width: 17px; flex: none; display: flex; flex-direction: column; align-items: center; overflow: hidden; }
.msg-x { font-size: 15px; line-height: 14px; margin-top: 3px; }
.msg-tri { margin-top: 6px; width: 0; height: 0; border: 3px solid transparent; border-left: 4px solid #bbb; border-right: 0; }
.msg-label { writing-mode: vertical-rl; transform: rotate(180deg); font-size: 10px; margin-top: 33px; flex: none; color: #222; white-space: nowrap; }
.msg-body { flex: 1; position: relative; background: #fff; border-left: 1px solid #aca899; padding-top: 2px; }
.mrow { height: 16px; display: flex; align-items: center; background-repeat: no-repeat; }
.m-a { padding-left: 4px; }
.m-b { padding-left: 28px; }
.m-c { padding-left: 24px; }
.m-d { padding-left: 47px; background-image: repeating-linear-gradient(#aaa 0 1px, transparent 1px 2px); background-size: 1px 8px; background-position: 47px 0; }
.gl-b { background-image: repeating-linear-gradient(#aaa 0 1px, transparent 1px 2px); background-size: 1px 8px; background-position: 8px 8px; }
.gl-t { background-image: repeating-linear-gradient(#aaa 0 1px, transparent 1px 2px), repeating-linear-gradient(#aaa 0 1px, transparent 1px 2px); background-size: 1px 8px, 1px 8px; background-position: 8px 0, 27px 8px; }
.gl-full { background-image: repeating-linear-gradient(#aaa 0 1px, transparent 1px 2px), repeating-linear-gradient(#aaa 0 1px, transparent 1px 2px); background-size: 1px 16px, 1px 8px; background-position: 8px 0, 28px 0; }
.m-c { background-image: repeating-linear-gradient(#aaa 0 1px, transparent 1px 2px); background-size: 1px 8px; background-position: 27px 0; }
.s-mid { width: 9px; }
.s-lead { width: 11px; }
.s-long { width: 28px; }
.mic { width: 17px; height: 17px; margin-right: 4px; flex: none; }
.mic2 { width: 13px; height: 15px; margin-right: 6px; flex: none; }
.warn { width: 16px; height: 16px; margin-right: 6px; flex: none; }
.sel-m { padding-right: 1px; }
.stamp { margin-left: 3px; }
.cjk { font-family: "Noto Sans CJK SC", sans-serif; font-size: 12px; letter-spacing: 0; line-height: 0; }
.watermark { position: absolute; right: 9px; bottom: 8px; display: flex; align-items: center; gap: 4px; color: #666; }
.wm-latin { font-size: 15px; letter-spacing: 1px; transform: scaleX(1.5); transform-origin: right center; line-height: 14px; }
.wm-cjk { font-family: "Noto Sans CJK SC", sans-serif; font-size: 16px; line-height: 14px; letter-spacing: 0; color: #999; }
</style>
